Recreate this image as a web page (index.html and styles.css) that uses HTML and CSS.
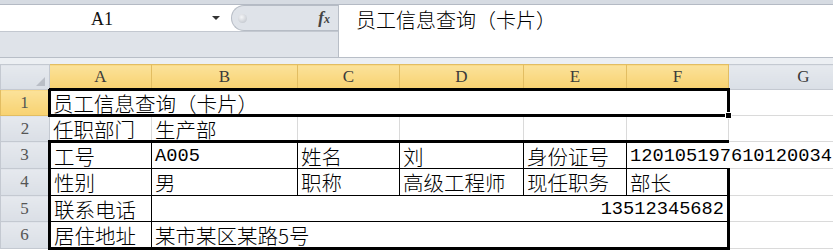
FILE: index.html
```html
<!DOCTYPE html>
<html lang="zh-CN">
<head>
  <meta charset="UTF-8" />
  <title>员工信息查询（卡片）</title>
  <link rel="stylesheet" href="styles.css">
</head>
<body>

  <div class="top-line"></div>

  <div class="formula-bar">
    <div class="name-side">
      <div class="name-row">
        <div class="name-box">
          <span class="name-label">A1</span>
          <span class="drop"></span>
        </div>
        <div class="fx-box">
          <span class="knob"></span>
          <span class="fx">f<small>x</small></span>
        </div>
      </div>
    </div>
    <div class="formula-input">员工信息查询（卡片）</div>
  </div>

  <div class="gap-strip"></div>

  <table class="sheet">
    <colgroup>
      <col class="c-head">
      <col class="c-a">
      <col class="c-b">
      <col class="c-c">
      <col class="c-d">
      <col class="c-e">
      <col class="c-f">
      <col class="c-g">
    </colgroup>
    <tr class="r-head">
      <th class="corner"></th>
      <th class="col sel">A</th>
      <th class="col sel">B</th>
      <th class="col sel">C</th>
      <th class="col sel">D</th>
      <th class="col sel">E</th>
      <th class="col sel">F</th>
      <th class="col">G</th>
    </tr>
    <tr class="r1">
      <th class="row sel">1</th>
      <td class="active" colspan="6">员工信息查询（卡片）<span class="handle"></span></td>
      <td></td>
    </tr>
    <tr class="r2">
      <th class="row">2</th>
      <td>任职部门</td>
      <td>生产部</td>
      <td></td>
      <td></td>
      <td></td>
      <td></td>
      <td></td>
    </tr>
    <tr class="r3">
      <th class="row">3</th>
      <td class="t first top">工号</td>
      <td class="t top num">A005</td>
      <td class="t top">姓名</td>
      <td class="t top">刘</td>
      <td class="t top">身份证号</td>
      <td class="t top num spill">120105197610120034</td>
      <td class="after-spill"></td>
    </tr>
    <tr class="r4">
      <th class="row">4</th>
      <td class="t first">性别</td>
      <td class="t">男</td>
      <td class="t">职称</td>
      <td class="t">高级工程师</td>
      <td class="t">现任职务</td>
      <td class="t last">部长</td>
      <td></td>
    </tr>
    <tr class="r5">
      <th class="row">5</th>
      <td class="t first">联系电话</td>
      <td class="t last num right" colspan="5">13512345682</td>
      <td></td>
    </tr>
    <tr class="r6">
      <th class="row">6</th>
      <td class="t first bottom">居住地址</td>
      <td class="t last bottom" colspan="5">某市某区某路5号</td>
      <td></td>
    </tr>
  </table>

</body>
</html>
```

FILE: styles.css
```css
* {
  box-sizing: border-box;
}

body {
  margin: 0;
  width: 833px;
  height: 250px;
  overflow: hidden;
  background-color: #ffffff;
  font-family: "Noto Sans CJK SC", sans-serif;
  color: #000;
}

.top-line {
  height: 5px;
  background-color: #d6dbe2;
  border-bottom: 1px solid #b4bac4;
}

/* formula bar */
.formula-bar {
  display: flex;
  height: 53px;
  border-bottom: 1px solid #b8bec7;
}

.name-side {
  width: 339px;
  background-color: #dfe3e9;
  border-right: 1px solid #b8bec7;
}

.name-row {
  display: flex;
  height: 27px;
  background-color: #ffffff;
  border-bottom: 1px solid #c3c8d0;
}

.name-box {
  width: 231px;
  display: flex;
  align-items: center;
}

.name-label {
  width: 204px;
  text-align: center;
  font-family: "Liberation Serif", serif;
  font-size: 18px;
  padding-top: 2px;
  color: #111;
}

.drop {
  margin-left: 8px;
  width: 0;
  height: 0;
  border-left: 4px solid transparent;
  border-right: 4px solid transparent;
  border-top: 4px solid #333;
}

.fx-box {
  flex: 1;
  display: flex;
  align-items: center;
  justify-content: space-between;
  padding: 0 8px 0 6px;
  background-color: #dfe3e9;
  border: 1px solid #b6bcc5;
  border-right: none;
  border-radius: 13px 0 0 13px;
}

.knob {
  width: 9px;
  height: 9px;
  border-radius: 50%;
  background: radial-gradient(circle at 40% 35%, #f4f5f7, #b9bec6);
}

.fx {
  font-family: "Liberation Serif", serif;
  font-style: italic;
  font-weight: bold;
  font-size: 17px;
  color: #444;
}

.fx small {
  font-size: 12px;
}

.formula-input {
  flex: 1;
  padding: 2px 17px;
  font-size: 20px;
  line-height: 26px;
  font-weight: 300;
}

.gap-strip {
  height: 6px;
  background-color: #eceff3;
}

/* sheet */
.sheet {
  border-collapse: collapse;
  table-layout: fixed;
  width: 878px;
}

.c-head { width: 49px; }
.c-a { width: 102px; }
.c-b { width: 146px; }
.c-c { width: 102px; }
.c-d { width: 124px; }
.c-e { width: 103px; }
.c-f { width: 102px; }
.c-g { width: 150px; }

.r-head { height: 25px; }
.r1 { height: 26px; }
.r2 { height: 26px; }
.r3 { height: 27px; }
.r4 { height: 27px; }
.r5 { height: 26px; }
.r6 { height: 27px; }

th {
  padding: 0;
  font-family: "Liberation Serif", serif;
  font-weight: normal;
  font-size: 17px;
  line-height: 20px;
  color: #3a3a3a;
  background: linear-gradient(#e6e9ee, #dadfe6);
  border: 1px solid #c4c9d1;
}

th.sel {
  background: linear-gradient(#fbe29a, #f8d271);
  border-color: #e2bd62;
}

th.col.sel {
  border-bottom: 1px solid #dba541;
}

th.row {
  color: #555;
}

th.row.sel {
  border-right-color: #dba541;
}

.corner {
  position: relative;
}

.corner::after {
  content: "";
  position: absolute;
  right: 4px;
  bottom: 3px;
  border-left: 9px solid transparent;
  border-bottom: 9px solid #b9bec6;
}

td {
  padding: 0 3px;
  border: 1px solid #dadada;
  font-size: 20.5px;
  font-weight: 300;
  line-height: 22px;
  white-space: nowrap;
  vertical-align: middle;
}

td.active {
  position: relative;
  border: 3px solid #000;
  padding-left: 2px;
}

.handle {
  position: absolute;
  right: -5px;
  bottom: -5px;
  width: 7px;
  height: 7px;
  background-color: #000;
  border: 1px solid #fff;
}

td.t {
  border: 1px solid #000;
}

td.first { border-left: 3px solid #000; }
td.last { border-right: 3px solid #000; }
td.top { border-top: 3px solid #000; }
td.bottom { border-bottom: 3px solid #000; }

td.num {
  font-family: "Liberation Mono", "Cousine", "Courier New", monospace;
  font-size: 18.7px;
  font-weight: normal;
}

td.right {
  text-align: right;
  padding-right: 3px;
}

td.spill {
  overflow: visible;
  border-right: hidden;
}

td.after-spill {
  border-left: hidden;
}
```
